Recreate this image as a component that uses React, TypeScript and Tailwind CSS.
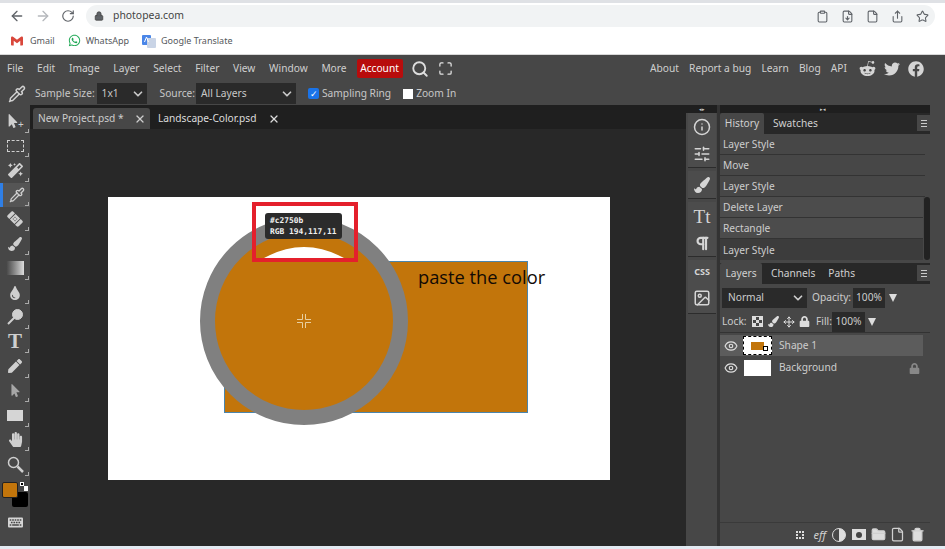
import { ArrowLeft, ArrowRight, RotateCw, Lock, Clipboard, FileDown, File, Share, Star, X, ChevronDown, Search, Info, SlidersHorizontal, Pilcrow, Image as ImageIcon, Eye, Move, Maximize, Pipette, FolderClosed, Trash2 } from "lucide-react";
import { FaRedditAlien, FaTwitter, FaFacebook, FaWhatsapp, FaMagic, FaPen, FaTint, FaHandPaper, FaKeyboard, FaPaintBrush, FaLock, FaMousePointer, FaBandAid } from "react-icons/fa";
import { SiGmail } from "react-icons/si";

const menuLeft = ["File", "Edit", "Image", "Layer", "Select", "Filter", "View", "Window", "More"];
const menuRight = ["About", "Report a bug", "Learn", "Blog", "API"];
const history = ["Layer Style", "Move", "Layer Style", "Delete Layer", "Rectangle"];

const cornerMark = "after:absolute after:right-[1px] after:bottom-[1px] after:w-[4px] after:h-[4px] after:border-r after:border-b after:border-[#aaa]";

function Tool({ children, active }: { children: React.ReactNode; active?: boolean }) {
  return (
    <div className={`relative h-[24.5px] w-[30px] flex items-center justify-center text-[#cfcfcf] ${active ? "bg-[#555] border-l-[3px] border-[#2f7fe6]" : ""} ${cornerMark}`}>
      {children}
    </div>
  );
}

function Tools() {
  return (
    <div className="w-[30px] shrink-0 bg-[#474747] pt-[4px] flex flex-col">
      <Tool>
        <FaMousePointer size={14} className="-ml-[4px]" />
        <span className="absolute left-[18px] top-[10px] text-[10px] leading-none">+</span>
      </Tool>
      <Tool><div className="w-[17px] h-[12px] border border-dashed border-[#cfcfcf]" /></Tool>
      <Tool><FaMagic size={15} /></Tool>
      <Tool active><Pipette size={16} /></Tool>
      <Tool><FaBandAid size={16} className="rotate-45" /></Tool>
      <Tool><FaPaintBrush size={14} /></Tool>
      <Tool><div className="w-[18px] h-[14px] bg-gradient-to-r from-[#444] to-[#ddd]" /></Tool>
      <Tool><FaTint size={14} /></Tool>
      <Tool>
        <svg width="18" height="18" viewBox="0 0 18 18" fill="#cfcfcf" stroke="#cfcfcf">
          <circle cx="11.5" cy="6.5" r="5" />
          <path d="M8 10 L2 16" strokeWidth="2" />
        </svg>
      </Tool>
      <Tool><span className="font-['Liberation_Serif',serif] text-[21px] font-bold leading-none">T</span></Tool>
      <Tool><FaPen size={14} /></Tool>
      <Tool><FaMousePointer size={13} className="opacity-70" /></Tool>
      <Tool><div className="w-[16px] h-[11px] bg-[#d5d5d5]" /></Tool>
      <Tool><FaHandPaper size={15} /></Tool>
      <Tool>
        <svg width="17" height="17" viewBox="0 0 17 17" fill="none" stroke="#cfcfcf">
          <circle cx="6.5" cy="6.5" r="5" strokeWidth="1.5" />
          <path d="M10.5 10.5 L16 16" strokeWidth="2.5" />
        </svg>
      </Tool>
      <div className="relative h-[30px] mt-[5px]">
        <div className="absolute left-[12px] top-[10px] w-[16px] h-[15px] bg-black rounded-[2px]" />
        <div className="absolute left-[2px] top-0 w-[16px] h-[16px] bg-[#c2750b] border border-[#222] rounded-[2px]" />
        <div className="absolute left-[20px] top-0 w-[4px] h-[4px] bg-black border border-white" />
        <div className="absolute left-[24px] top-[4px] w-[4px] h-[5px] bg-white" />
      </div>
      <div className="flex justify-center mt-[3px] text-[#d5d5d5]"><FaKeyboard size={15} /></div>
    </div>
  );
}

function Canvas() {
  return (
    <div className="flex-1 min-w-0 bg-[#282828] flex flex-col">
      <div className="h-[24px] bg-[#1f1f1f] pt-[3px] pl-[3px] flex items-end text-[10.2px] text-[#cdcdcd]">
        <div className="h-[21px] w-[117px] bg-[#474747] rounded-t-[3px] pl-[5px] pr-[4px] flex items-center justify-between">
          <span>New Project.psd *</span>
          <X size={12} strokeWidth={2.5} />
        </div>
        <div className="h-[21px] pl-[8px] flex items-center gap-[11px] text-[#dcdcdc]">
          <span>Landscape-Color.psd</span>
          <X size={12} strokeWidth={2.5} />
        </div>
      </div>
      <div className="pl-[78px] pt-[68px]">
        <div className="relative w-[502px] h-[283px] bg-white">
          <div className="absolute left-[116px] top-[64px] w-[304px] h-[152px] bg-[#c2750b] border border-[#4a85ad]" />
          <span className="absolute left-[310px] top-[66px] text-[18.3px] leading-[28px] text-[#120a04] font-['Open_Sans',sans-serif]">paste the color</span>
          <div className="absolute left-[92px] top-[20px] w-[208px] h-[208px] rounded-full bg-[#c2750b] border-[15px] border-[#808080]" />
          <svg className="absolute left-[156px] top-[50px]" width="80" height="11" viewBox="0 0 80 11">
            <path d="M0 11 Q40 -11 80 11 Z" fill="#fff" />
          </svg>
          <svg className="absolute left-[188px] top-[116px]" width="16" height="16" viewBox="0 0 16 16" fill="none" stroke="#e8cfa0" strokeWidth="1">
            <path d="M6.5 1V6.5H1M9.5 1V6.5H15M6.5 15V9.5H1M9.5 15V9.5H15" />
          </svg>
          <div className="absolute left-[144px] top-[5px] w-[106px] h-[60px] border-[4px] border-[#e4202c]" />
          <div className="absolute left-[157px] top-[16px] w-[77px] h-[26px] bg-[#2b2b2b] rounded-[3px] px-[5px] pt-[2px] font-['DejaVu_Sans_Mono',monospace] text-[7.9px] leading-[11px] font-bold text-[#f0f0f0]">
            <div>#c2750b</div>
            <div>RGB 194,117,11</div>
          </div>
        </div>
      </div>
    </div>
  );
}

function DockGroup({ children, h }: { children: React.ReactNode; h: string }) {
  return <div className={`${h} mb-[3px] border-b border-[#2c2c2c] bg-[#4c4c4c] flex flex-col items-center justify-around text-[#d5d5d5]`}>{children}</div>;
}

function Dock() {
  return (
    <div className="w-[34px] shrink-0 bg-[#474747] border-r-[3px] border-[#333]">
      <div className="relative h-[8px] bg-[#1f1f1f] text-[5px] leading-[8px] text-center text-[#ccc]">◂▸</div>
      <div className="pl-[2px] pr-[1px]">
        <DockGroup h="h-[55px]"><Info size={18} /><SlidersHorizontal size={18} /></DockGroup>
        <DockGroup h="h-[28px]"><FaPaintBrush size={16} /></DockGroup>
        <DockGroup h="h-[55px]">
          <span className="font-['Liberation_Serif',serif] text-[19px] leading-none">Tt</span>
          <Pilcrow size={17} strokeWidth={3} />
        </DockGroup>
        <DockGroup h="h-[54px]">
          <span className="text-[9px] font-bold leading-none">CSS</span>
          <ImageIcon size={18} />
        </DockGroup>
      </div>
    </div>
  );
}

function PanelTabs({ tabs, activeWidth }: { tabs: string[]; activeWidth: string }) {
  return (
    <div className="relative h-[21px] bg-[#282828] flex text-[10.2px] text-[#d0d0d0] items-center">
      <div className={`${activeWidth} h-full bg-[#474747] flex items-center justify-center rounded-t-[2px]`}>{tabs[0]}</div>
      {tabs.slice(1).map((t, i) => (
        <span key={t} className={i === 0 ? "ml-[9px]" : "ml-[13px]"}>{t}</span>
      ))}
      <div className="absolute right-0 top-[2px] w-[13px] h-[16px] bg-[#474747] flex flex-col items-center justify-center gap-[2px]">
        <div className="w-[6px] h-px bg-[#ccc]" />
        <div className="w-[6px] h-px bg-[#ccc]" />
        <div className="w-[6px] h-px bg-[#ccc]" />
      </div>
    </div>
  );
}

function Panels() {
  return (
    <div className="w-[225px] shrink-0 flex flex-col text-[10.2px] text-[#cdcdcd] pr-[15px] bg-[#474747]">
      <div className="h-[8px] bg-[#1f1f1f] text-[5px] leading-[8px] text-[#ccc] pl-[100px]">▸◂</div>
      <PanelTabs tabs={["History", "Swatches"]} activeWidth="w-[44px]" />
      <div className="relative">
        {history.map((h, i) => (
          <div key={i} className={`h-[21px] flex items-center pl-[3px] pt-[2px] border-b border-[#333] ${i > 2 ? "mr-[7px] bg-[#4c4c4c]" : "mr-[5px]"}`}>{h}</div>
        ))}
        <div className="h-[21px] flex items-center pl-[3px] pt-[2px] bg-[#3c3c3c] mr-[7px]">Layer Style</div>
        <div className="absolute right-0 top-[63px] bottom-0 w-[6px] bg-[#222] rounded-[3px]" />
      </div>
      <div className="mt-[3px]">
        <PanelTabs tabs={["Layers", "Channels", "Paths"]} activeWidth="w-[42px]" />
      </div>
      <div className="flex items-center h-[26px] pl-[2px] mt-[1px]">
        <div className="w-[85px] h-[20px] bg-[#2a2a2a] flex items-center justify-between pl-[6px] pr-[2px]">
          Normal <ChevronDown size={14} strokeWidth={3} />
        </div>
        <span className="ml-[5px] w-[39px]">Opacity:</span>
        <div className="ml-[2px] w-[32px] h-[20px] bg-[#2a2a2a] flex items-center justify-center">100%</div>
        <div className="ml-[4px] w-0 h-0 border-x-[4px] border-x-transparent border-t-[8px] border-t-[#ddd]" />
      </div>
      <div className="flex items-center h-[22px] pl-[2px] border-b border-[#333]">
        <span className="w-[24px]">Lock:</span>
        <div className="ml-[6px] grid grid-cols-3 w-[11px] h-[11px] border border-[#ddd]">
          {[0, 1, 2, 3, 4, 5, 6, 7, 8].map((n) => (
            <div key={n} className={n % 2 === 0 ? "bg-[#ddd]" : ""} />
          ))}
        </div>
        <FaPaintBrush size={11} className="ml-[5px] text-[#ddd]" />
        <Move size={12} className="ml-[4px] text-[#ddd]" />
        <FaLock size={11} className="ml-[4px] text-[#ddd]" />
        <span className="ml-[6px] w-[16px]">Fill:</span>
        <div className="w-[33px] h-[20px] bg-[#2a2a2a] flex items-center justify-center">100%</div>
        <div className="ml-[3px] w-0 h-0 border-x-[4px] border-x-transparent border-t-[8px] border-t-[#ddd]" />
      </div>
      <div className="mt-[2px] h-[21px] bg-[#5c5c5c] flex items-center mr-[7px]">
        <Eye size={14} className="ml-[4px] text-[#ddd]" />
        <div className="relative ml-[5px] w-[29px] h-[19px] bg-white border border-dashed border-black flex items-center justify-center">
          <div className="w-[13px] h-[8px] bg-[#c2750b]" />
          <div className="absolute right-[3px] bottom-[3px] w-[5px] h-[5px] border border-black bg-white" />
        </div>
        <span className="ml-[7px]">Shape 1</span>
      </div>
      <div className="mt-[2px] h-[20px] flex items-center mr-[7px]">
        <Eye size={14} className="ml-[4px] text-[#ddd]" />
        <div className="ml-[6px] w-[27px] h-[16px] bg-white" />
        <span className="ml-[8px] flex-1">Background</span>
        <FaLock size={11} className="mr-[3px] text-[#888]" />
      </div>
      <div className="flex-1" />
      <div className="h-[24px] border-t border-[#3a3a3a] flex items-center justify-end text-[#d0d0d0] pr-[3px]">
        <div className="w-[19.5px] flex justify-center"><div className="w-[8px] h-[8px] border-[2px] border-dotted border-[#ddd]" /></div>
        <div className="w-[19.5px] flex justify-center text-[11px] italic leading-none">eff</div>
        <div className="w-[19.5px] flex justify-center"><div className="w-[14px] h-[14px] rounded-full border border-[#ddd] bg-gradient-to-r from-transparent from-50% to-[#ddd] to-50%" /></div>
        <div className="w-[19.5px] flex justify-center"><div className="w-[14px] h-[11px] bg-[#ddd] flex items-center justify-center"><div className="w-[6px] h-[6px] rounded-full bg-[#444]" /></div></div>
        <div className="w-[19.5px] flex justify-center"><FolderClosed size={15} fill="#ddd" /></div>
        <div className="w-[19.5px] flex justify-center"><File size={15} /></div>
        <div className="w-[19.5px] flex justify-center"><Trash2 size={15} fill="#ddd" /></div>
      </div>
    </div>
  );
}

export default function App() {
  return (
    <div className="w-[945px] h-[549px] overflow-hidden flex flex-col bg-white font-['Noto_Sans',sans-serif]">
      <div className="h-[3px] bg-[#dfe1e5]" />
      <div className="h-[26px] flex items-center pl-[9px] pr-[10px] text-[#5f6368] bg-white">
        <ArrowLeft size={16} strokeWidth={2} />
        <ArrowRight size={16} strokeWidth={2} className="ml-[10px] text-[#b5b8bc]" />
        <RotateCw size={14} strokeWidth={2} className="ml-[10px]" />
        <div className="ml-[11px] flex-1 h-[22px] rounded-full bg-[#f1f3f4] flex items-center pl-[8px] pr-[6px] text-[10.4px] text-[#444]">
          <Lock size={10} fill="#5f6368" />
          <span className="ml-[9px]">photopea.com</span>
          <div className="flex-1" />
          <div className="flex items-center gap-[12px] text-[#5f6368]">
            <Clipboard size={13} />
            <FileDown size={13} />
            <File size={13} />
            <Share size={13} />
            <Star size={13} />
          </div>
        </div>
      </div>
      <div className="h-[26px] flex items-center pl-[11px] pb-[2px] text-[9px] text-[#55585c] bg-white border-b border-[#d8d8d8]">
        <SiGmail size={12} className="text-[#d9473b]" />
        <span className="ml-[7px]">Gmail</span>
        <FaWhatsapp size={13} className="ml-[13px] text-[#1fa855]" />
        <span className="ml-[5px]">WhatsApp</span>
        <svg className="ml-[13px]" width="14" height="14" viewBox="0 0 14 14">
          <rect x="0" y="1" width="9" height="10" rx="1" fill="#4a86e8" />
          <rect x="5" y="4" width="9" height="10" rx="1" fill="#c9d4e6" />
          <path d="M2.5 8 L4.5 3 L6.5 8" stroke="#fff" fill="none" strokeWidth="1" />
        </svg>
        <span className="ml-[5px]">Google Translate</span>
      </div>

      <div className="h-[26px] bg-[#474747] flex items-center pl-[7px] pr-[21px] pt-[1px] text-[10.2px] text-[#cfcfcf]">
        <div className="flex items-center gap-[13.7px]">
          {menuLeft.map((m) => (
            <span key={m}>{m}</span>
          ))}
        </div>
        <span className="ml-[10px] h-[19px] w-[46px] bg-[#b80c0c] rounded-[2px] text-white flex items-center justify-center">Account</span>
        <Search size={18} strokeWidth={2.5} className="ml-[8px] text-[#ddd]" />
        <Maximize size={15} strokeWidth={2} className="ml-[9px] text-[#e5e5e5]" />
        <div className="flex-1" />
        <div className="flex items-center gap-[10.2px]">
          {menuRight.map((m) => (
            <span key={m}>{m}</span>
          ))}
        </div>
        <div className="ml-[12px] flex items-center gap-[8px] text-[#d5d5d5]">
          <FaRedditAlien size={17} />
          <FaTwitter size={16} />
          <FaFacebook size={16} />
        </div>
      </div>
      <div className="h-[24px] bg-[#474747] flex items-center pl-[8px] pt-[1px] text-[10.2px] text-[#c8c8c8]">
        <Pipette size={18} className="text-[#d0d0d0]" />
        <span className="ml-[9px]">Sample Size:</span>
        <div className="ml-[2px] w-[50px] h-[21px] bg-[#2a2a2a] flex items-center justify-between pl-[5px] pr-[2px]">1x1 <ChevronDown size={14} strokeWidth={3} /></div>
        <span className="ml-[13px]">Source:</span>
        <div className="ml-[1px] w-[100px] h-[21px] bg-[#2a2a2a] flex items-center justify-between pl-[5px] pr-[2px]">All Layers <ChevronDown size={14} strokeWidth={3} /></div>
        <div className="ml-[12px] w-[11px] h-[11px] bg-[#1a73e8] rounded-[2px] flex items-center justify-center text-white text-[9px] leading-none">✓</div>
        <span className="ml-[3px]">Sampling Ring</span>
        <div className="ml-[12px] w-[10px] h-[10px] bg-white" />
        <span className="ml-[3px]">Zoom In</span>
      </div>
      <div className="flex-1 min-h-0 flex">
        <Tools />
        <Canvas />
        <Dock />
        <Panels />
      </div>
      <div className="h-[3px] bg-[#e3eaf2]" />
    </div>
  );
}
